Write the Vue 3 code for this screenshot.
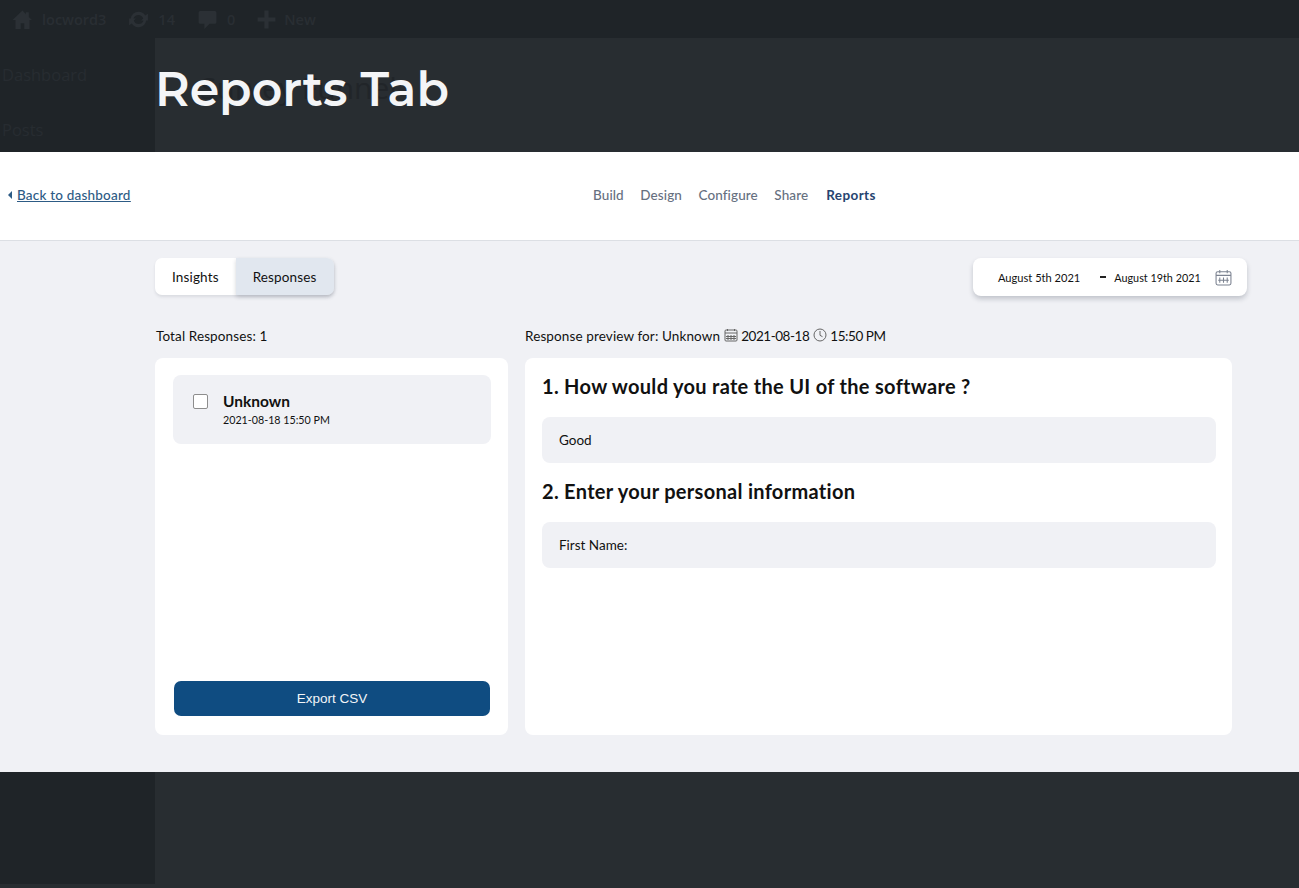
<script setup>
const navItems = [
  { label: 'Build' },
  { label: 'Design' },
  { label: 'Configure' },
  { label: 'Share' },
  { label: 'Reports', active: true },
]
const answers = [
  { question: '1. How would you rate the UI of the software ?', answer: 'Good' },
  { question: '2. Enter your personal information', answer: 'First Name:' },
]
</script>

<template>
  <div class="page">
    <div class="backdrop">
      <div class="adminbar">
        <svg class="ab-icon" viewBox="0 0 20 20"><path d="M10 1.500 0.500 10.500h2.800V19h5v-5.500h3.400V19h5v-8.500h2.300l-3-2.900V3h-2.800v2z"/></svg>
        <span class="ab-text">locword3</span>
        <svg class="ab-icon second" viewBox="0 0 20 20"><path d="M10 2.500a7.500 7.500 0 0 1 6.400 3.600L19 4.500V11h-6.500l2-2a4.900 4.900 0 0 0-9.300 0H2.700A7.500 7.500 0 0 1 10 2.500zM1 9h6.500l-2 2a4.900 4.900 0 0 0 9.300 0h2.500a7.500 7.500 0 0 1-13.700 2.900L1 15.500z"/></svg>
        <span class="ab-text">14</span>
        <svg class="ab-icon third" viewBox="0 0 20 20"><path d="M3 2h14a1.500 1.500 0 0 1 1.500 1.500v9a1.500 1.500 0 0 1-1.500 1.500h-5l-5 5v-5H3a1.500 1.500 0 0 1-1.500-1.500v-9A1.500 1.500 0 0 1 3 2z"/></svg>
        <span class="ab-text">0</span>
        <svg class="ab-icon fourth" viewBox="0 0 20 20"><path d="M8 1.500h4V8h6.500v4H12v6.500H8V12H1.500V8H8z"/></svg>
        <span class="ab-text new">New</span>
      </div>
      <div class="admin-body">
        <div class="sidemenu">
          <div class="side-item">Dashboard</div>
          <div class="side-item">Posts</div>
        </div>
        <div class="admin-main">
          <div class="ghost-title">Survey Funnel</div>
        </div>
      </div>
    </div>

    <div class="front">
      <header class="title-row">
        <h1>Reports Tab</h1>
      </header>

      <div class="panel">
        <div class="topnav">
          <a class="back" href="#"><span class="caret"></span><span class="back-text">Back to dashboard</span></a>
          <nav class="tabs">
            <span v-for="item in navItems" :key="item.label" class="tab" :class="{ active: item.active }">{{ item.label }}</span>
          </nav>
        </div>

        <div class="content">
          <div class="toolbar">
            <div class="segment">
              <span class="seg">Insights</span>
              <span class="seg on">Responses</span>
            </div>
            <div class="daterange">
              <span class="d1">August 5th 2021</span>
              <span class="dash"></span>
              <span class="d2">August 19th 2021</span>
              <svg class="cal-lg" viewBox="0 0 16 16" fill="none" stroke="#7b8290" stroke-width="1">
                <rect x="1" y="2.500" width="14" height="12.500" rx="1.500"/>
                <path d="M1 6h14M4.500 1v3M11.500 1v3M4.500 8v5M8 8v5M11.500 8v5M3 10.500h10"/>
              </svg>
            </div>
          </div>

          <div class="columns">
            <section class="col-left">
              <p class="caption inset">Total Responses: 1</p>
              <div class="card left-card">
                <div class="resp-item">
                  <span class="checkbox"></span>
                  <div>
                    <div class="resp-name">Unknown</div>
                    <div class="resp-date">2021-08-18 15:50 PM</div>
                  </div>
                </div>
                <button class="export">Export CSV</button>
              </div>
            </section>

            <section class="col-right">
              <p class="caption">
                <span>Response preview for: Unknown</span>
                <svg class="mini" viewBox="0 0 14 14" fill="none" stroke="#666" stroke-width="1">
                  <rect x="1" y="2" width="12" height="11" rx="1"/>
                  <path d="M1 5h12M3.500 1v2M10.500 1v2M4 7v5M7 7v5M10 7v5M2 8.500h10M2 10.500h10"/>
                </svg>
                <span class="num">2021-08-18</span>
                <svg class="mini" viewBox="0 0 14 14" fill="none" stroke="#666" stroke-width="1">
                  <circle cx="7" cy="7" r="6"/>
                  <path d="M7 3v4.300l2.500 1.400"/>
                </svg>
                <span class="num">15:50 PM</span>
              </p>
              <div class="card right-card">
                <div v-for="a in answers" :key="a.question" class="qa">
                  <h2>{{ a.question }}</h2>
                  <div class="answer">{{ a.answer }}</div>
                </div>
              </div>
            </section>
          </div>
        </div>
      </div>
    </div>
  </div>
</template>

<style>
html, body { margin: 0; background: #282d31; }
</style>

<style scoped>
.page {
  position: relative;
  width: 1299px;
  height: 888px;
  overflow: hidden;
  background: #282d31;
  font-family: "Lato", "Noto Sans", sans-serif;
  color: #111;
}
.backdrop {
  position: absolute;
  inset: 0;
  display: flex;
  flex-direction: column;
}
.adminbar {
  height: 38px;
  background: #1f2428;
  display: flex;
  align-items: center;
  padding-left: 12px;
  color: #292e33;
  font: 600 14.500px "Open Sans", sans-serif;
}
.ab-icon { width: 21px; height: 21px; fill: #2b3035; flex: none; }
.ab-icon.second { margin-left: 22px; }
.ab-icon.third { margin-left: 22px; }
.ab-icon.fourth { margin-left: 21px; }
.ab-text { margin-left: 9px; }
.ab-text.new { margin-left: 7px; }
.admin-body { flex: 1; display: flex; }
.sidemenu {
  width: 155px;
  height: 846px;
  background: #1f2428;
  color: #272c31;
  font: 16.500px "Open Sans", sans-serif;
}
.side-item { height: 55px; padding: 26px 0 0 2px; box-sizing: border-box; line-height: 22px; }
.admin-main { flex: 1; padding: 30px 0 0 45px; }
.ghost-title { font: 30px/40px "Open Sans", sans-serif; color: #212529; }

.front { position: relative; display: flex; flex-direction: column; }
.title-row { height: 152px; box-sizing: border-box; padding: 58px 0 0 155px; }
h1 {
  margin: 0;
  font: 600 47.400px/62px "Montserrat", "Inter", sans-serif;
  color: #f4f5f7;
}
.panel { background: #f0f1f5; height: 620px; }
.topnav {
  background: #fff;
  border-bottom: 1px solid #dcdfe4;
  display: flex;
  align-items: center;
  padding: 0 0 3px 8px;
  box-sizing: border-box;
  height: 89px;
  font-size: 13.500px;
  font-weight: 500;
  letter-spacing: .2px;
}
.back {
  display: flex;
  align-items: center;
  gap: 5px;
  width: 123px;
  white-space: nowrap;
  color: #2d5b85;
  line-height: 18px;
}
.back-text { text-decoration: underline; }
.caret {
  width: 0;
  height: 0;
  border-top: 4px solid transparent;
  border-bottom: 4px solid transparent;
  border-right: 4px solid #2d5b85;
}
.tabs { display: flex; gap: 16.500px; margin-left: 462px; color: #66707f; letter-spacing: .1px; }
.tab.active { color: #26446f; font-weight: 700; letter-spacing: .4px; margin-left: 1.500px; }

.content { padding: 17px 52px 0 155px; }
.toolbar { display: flex; justify-content: space-between; }
.segment {
  display: flex;
  height: 37px;
  border-radius: 7px;
  background: #fff;
  box-shadow: 0 2px 3px rgba(30, 40, 60, .1);
  font-size: 13.500px;
  letter-spacing: .15px;
}
.seg { padding: 0 17px; line-height: 38px; border-radius: 7px 0 0 7px; }
.seg.on { background: #e1e7ef; border-radius: 0 7px 7px 0; box-shadow: 0 2px 4px rgba(30, 40, 60, .2); }
.daterange {
  width: 274px;
  height: 38px;
  background: #fff;
  border-radius: 8px;
  box-shadow: 0 3px 5px rgba(30, 40, 60, .22);
  display: flex;
  align-items: center;
  padding-left: 25px;
  box-sizing: border-box;
  font-size: 11.100px;
}
.d2 { font-size: 10.800px; }
.dash { width: 6px; height: 2px; background: #222; margin: 0 8px 0 20px; }
.cal-lg { width: 17px; height: 17px; margin-left: 14px; }

.columns { display: flex; gap: 17px; margin-top: 32px; margin-right: 15px; }
.col-left { width: 353px; flex: none; }
.col-right { flex: 1; }
.caption { margin: 0 0 13px; font-size: 13.500px; line-height: 17px; letter-spacing: .12px; display: flex; align-items: center; gap: 3.500px; }
.caption.inset { padding-left: 1px; }
.num { letter-spacing: -.45px; }
.mini { width: 14px; height: 14px; margin-top: -3px; }
.card { background: #fff; border-radius: 8px; height: 377px; box-sizing: border-box; }
.left-card { padding: 17px 17px 17px 18px; display: flex; flex-direction: column; justify-content: space-between; }
.resp-item {
  height: 69px;
  background: #f0f1f5;
  border-radius: 8px;
  display: flex;
  align-items: center;
  gap: 15px;
  padding-left: 20px;
  box-sizing: border-box;
}
.checkbox { width: 13px; height: 13px; border: 1.500px solid #8d8d8d; border-radius: 2px; background: #fff; align-self: flex-start; margin-top: 19px; }
.resp-name { font-size: 15.500px; font-weight: 700; line-height: 20px; }
.resp-date { font-size: 10.700px; line-height: 16px; margin-top: 1px; }
.export {
  margin: 0 1px 2px;
  height: 35px;
  border: 0;
  border-radius: 7px;
  background: #0f4c81;
  color: #f2f5f8;
  font: 13.500px "Liberation Sans", Arial, sans-serif;
}
.right-card { padding: 16px 16px 0 17px; }
.qa + .qa { margin-top: 16px; }
h2 { margin: 0 0 18px; font-size: 20px; line-height: 25px; font-weight: 700; letter-spacing: .3px; color: #111; }
.answer {
  height: 46px;
  background: #f0f1f5;
  border-radius: 8px;
  padding-left: 17px;
  line-height: 46px;
  font-size: 13.500px;
}
</style>
